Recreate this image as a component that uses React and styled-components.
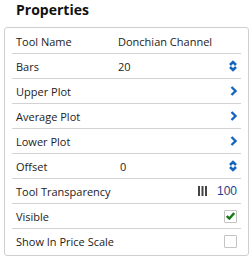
import React from "react";
import styled, { createGlobalStyle } from "styled-components";

const GlobalStyle = createGlobalStyle`
  body {
    margin: 0;
    background: #fff;
    font-family: "Open Sans", "DejaVu Sans", sans-serif;
  }
`;

function SpinIcon() {
  return (
    <svg width="8" height="12" viewBox="0 0 8 12">
      <path d="M1 5 L4 2 L7 5" fill="none" stroke="#1565c0" strokeWidth="2.6" />
      <path d="M1 7 L4 10 L7 7" fill="none" stroke="#1565c0" strokeWidth="2.6" />
    </svg>
  );
}

function ChevronIcon() {
  return (
    <svg width="7" height="10" viewBox="0 0 7 10">
      <path d="M1.5 1 L5.5 5 L1.5 9" fill="none" stroke="#1565c0" strokeWidth="2.4" />
    </svg>
  );
}

function SliderIcon() {
  return (
    <svg width="9" height="10" viewBox="0 0 9 10">
      <rect x="0" y="0" width="2" height="10" fill="#444" />
      <rect x="3.5" y="0" width="2" height="10" fill="#444" />
      <rect x="7" y="0" width="2" height="10" fill="#444" />
    </svg>
  );
}

const rows = [
  { label: "Tool Name", value: "Donchian Channel" },
  { label: "Bars", value: "20", icon: "spin" },
  { label: "Upper Plot", icon: "chevron" },
  { label: "Average Plot", icon: "chevron" },
  { label: "Lower Plot", icon: "chevron" },
  { label: "Offset", value: "0", icon: "spin", indent: 2 },
  { label: "Tool Transparency", icon: "slider" },
  { label: "Visible", icon: "checked" },
  { label: "Show In Price Scale", icon: "unchecked" },
];

function Control({ icon }) {
  if (icon === "spin") return <SpinIcon />;
  if (icon === "chevron") return <ChevronIcon />;
  if (icon === "slider")
    return (
      <Transparency>
        <SliderIcon />
        <Number>100</Number>
      </Transparency>
    );
  if (icon === "checked")
    return (
      <Check>
        <svg width="9" height="8" viewBox="0 0 9 8">
          <path d="M0.8 4 L3.4 6.5 L8.2 1" fill="none" stroke="#157a15" strokeWidth="2.4" />
        </svg>
      </Check>
    );
  if (icon === "unchecked") return <Check />;
  return null;
}

function App() {
  return (
    <>
      <GlobalStyle />
      <Page>
        <Title>Properties</Title>
        <Panel>
          {rows.map((r) => (
            <Row key={r.label}>
              <Label>{r.label}</Label>
              <Value $indent={r.indent}>{r.value}</Value>
              <Action>
                <Control icon={r.icon} />
              </Action>
            </Row>
          ))}
        </Panel>
      </Page>
    </>
  );
}

export default App;

const Page = styled.div`
  width: 251px;
  height: 260px;
  padding: 0 0 0 4px;
  box-sizing: border-box;
`;
const Title = styled.h1`
  margin: 0;
  padding-left: 12px;
  height: 27px;
  line-height: 19px;
  font-size: 14px;
  font-weight: 700;
  color: #111;
`;
const Panel = styled.div`
  width: 245px;
  box-sizing: border-box;
  border: 1px solid #cfcfcf;
  border-radius: 3px;
  padding: 1px 7px 1px;
`;
const Row = styled.div`
  display: grid;
  grid-template-columns: 102px 1fr auto;
  align-items: center;
  height: 24px;
  padding: 0 4px;
  border-bottom: 1px solid #d2d2d2;
  font-size: 11px;
  color: #222;
  &:last-child {
    border-bottom: none;
    height: 25px;
  }
`;
const Label = styled.span`
  white-space: nowrap;
`;
const Value = styled.span`
  white-space: nowrap;
  color: #222;
  padding-left: ${(p) => p.$indent || 0}px;
`;
const Action = styled.span`
  display: flex;
  align-items: center;
  justify-content: flex-end;
`;
const Transparency = styled.span`
  display: flex;
  align-items: center;
  gap: 10px;
`;
const Number = styled.span`
  font-family: "Liberation Sans", Arial, sans-serif;
  font-size: 12px;
  color: #1f3f8f;
`;
const Check = styled.span`
  display: flex;
  align-items: center;
  justify-content: center;
  width: 11px;
  height: 11px;
  border: 1px solid #c4c4c4;
  border-radius: 1px;
  background: #fff;
`;
